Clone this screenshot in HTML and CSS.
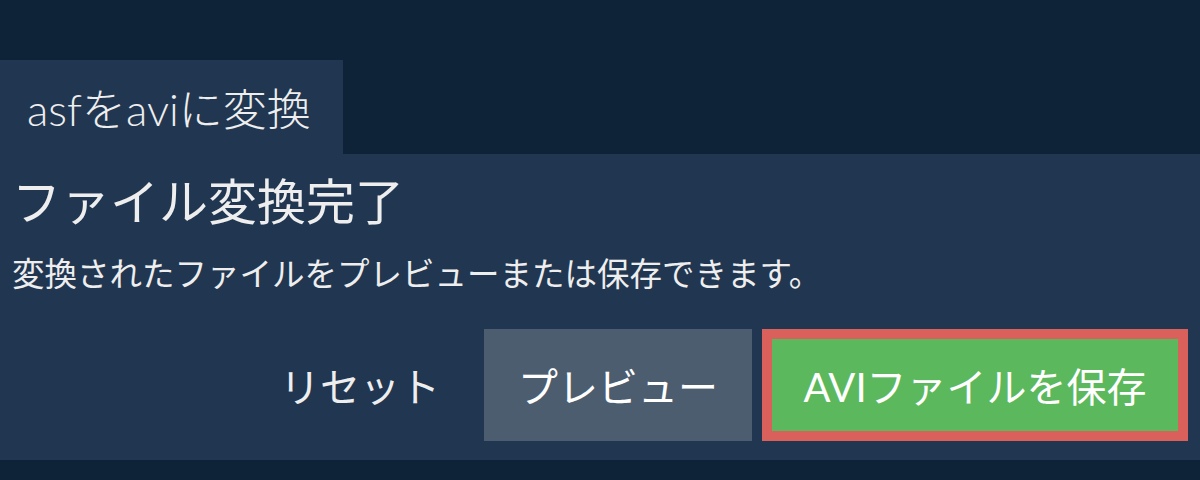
FILE: index.html
```html
<!DOCTYPE html>
<html lang="ja">
<head>
	<meta charset="UTF-8">
	<meta name="viewport" content="width=device-width">
	<title>asfをaviに変換</title>
	<link rel="stylesheet" href="styles.css">
</head>
<body>
<main class="converter">

	<div class="tabs">
		<div class="tab">asfをaviに変換</div>
	</div>

	<section class="panel">
		<h1>ファイル変換完了</h1>
		<p class="note">変換されたファイルをプレビューまたは保存できます。</p>

		<div class="actions">
			<button class="btn btn-reset">リセット</button>
			<button class="btn btn-preview">プレビュー</button>
			<button class="btn btn-save">AVIファイルを保存</button>
		</div>
	</section>

</main>
</body>
</html>
```

FILE: styles.css
```css
body {
	margin: 0;
	background: #0f2338;
	color: #eeeeee;
	font-family: Lato, "Noto Sans CJK JP", sans-serif;
}

.converter {
	padding-top: 60px;
}

.tabs {
	display: flex;
}

.tab {
	width: 343px;
	height: 94px;
	box-sizing: border-box;
	padding-left: 27px;
	display: flex;
	align-items: center;
	background: #213650;
	font-size: 44px;
	font-weight: 300;
}

.panel {
	background: #213650;
	padding: 18px 12px 19px 12px;
}

.panel h1 {
	margin: 0;
	font-size: 49px;
	font-weight: 400;
	line-height: 1.2;
}

.panel .note {
	margin: 22px 0 0 0;
	font-size: 32.5px;
	line-height: 1.3;
}

.actions {
	display: flex;
	justify-content: flex-end;
	align-items: center;
	gap: 10px;
	margin-top: 34px;
}

.btn {
	font-family: inherit;
	font-size: 40px;
	color: #ffffff;
	border: none;
	height: 112px;
	box-sizing: border-box;
	cursor: pointer;
}

.btn-reset {
	background: none;
	color: #eeeeee;
	padding: 0 34px;
}

.btn-preview {
	background: #4c5d6f;
	width: 268px;
}

.btn-save {
	background: #5cb85c;
	border: 10px solid #da605b;
	width: 426px;
}
```
